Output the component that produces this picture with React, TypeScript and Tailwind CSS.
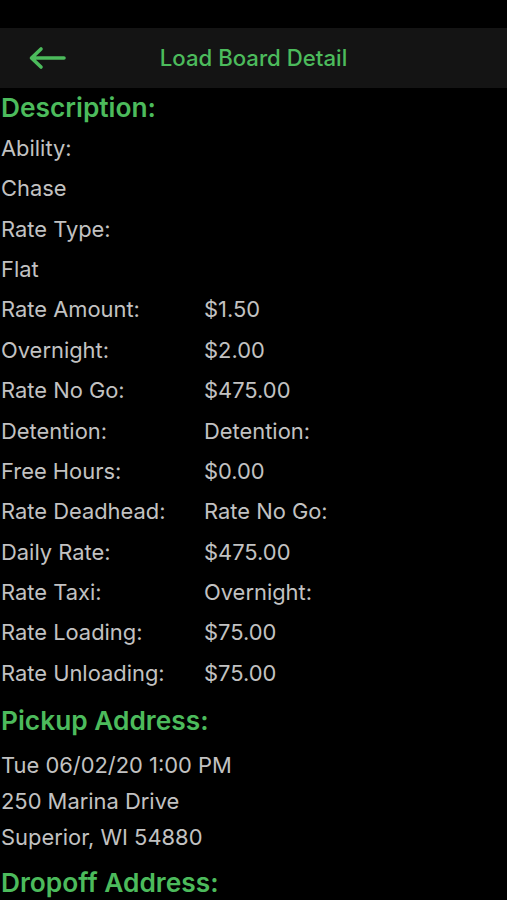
import React from "react";

const rates: [string, string][] = [
  ["Rate Amount:", "$1.50"],
  ["Overnight:", "$2.00"],
  ["Rate No Go:", "$475.00"],
  ["Detention:", "Detention:"],
  ["Free Hours:", "$0.00"],
  ["Rate Deadhead:", "Rate No Go:"],
  ["Daily Rate:", "$475.00"],
  ["Rate Taxi:", "Overnight:"],
  ["Rate Loading:", "$75.00"],
  ["Rate Unloading:", "$75.00"],
];

const BackArrow = () => (
  <svg width="38" height="24" viewBox="0 0 38 24" fill="none">
    <path
      d="M36 12H4M13 3L3.5 12L13 21"
      stroke="#4cbb5c"
      strokeWidth="3.6"
      strokeLinecap="round"
      strokeLinejoin="round"
    />
  </svg>
);

export default function App() {
  return (
    <div className="min-h-[900px] w-[507px] overflow-hidden bg-black font-['Inter',sans-serif] text-[#c2c2c2]">
      <div className="h-7" />
      {/* Header */}
      <div className="relative flex h-[60px] items-center justify-center bg-[#141414]">
        <button className="absolute left-[28px] top-[18px]">
          <BackArrow />
        </button>
        <h1 className="text-[22.2px] font-medium text-[#4cbb5c]">Load Board Detail</h1>
      </div>

      <div className="pl-[1px]">
        <h2 className="flex h-10 items-center text-[26.3px] font-semibold text-[#4cbb5c]">Description:</h2>
        <div className="flex h-[40.4px] items-center text-[21.9px]">Ability:</div>
        <div className="flex h-[40.4px] items-center text-[21.9px]">Chase</div>
        <div className="flex h-[40.4px] items-center text-[21.9px]">Rate Type:</div>
        <div className="flex h-[40.4px] items-center text-[21.9px]">Flat</div>
        {rates.map(([label, value], i) => (
          <div key={i} className="grid h-[40.4px] grid-cols-[203px_1fr] items-center text-[21.9px]">
            <span>{label}</span>
            <span>{value}</span>
          </div>
        ))}

        <h2 className="flex h-[54px] items-center text-[26.3px] font-semibold text-[#4cbb5c]">Pickup Address:</h2>
        <div className="flex h-9 items-center text-[21.9px]">Tue 06/02/20 1:00 PM</div>
        <div className="flex h-9 items-center text-[21.9px]">250 Marina Drive</div>
        <div className="flex h-9 items-center text-[21.9px]">Superior, WI 54880</div>
        <h2 className="flex h-[54px] items-center text-[26.3px] font-semibold text-[#4cbb5c]">Dropoff Address:</h2>
      </div>
    </div>
  );
}
